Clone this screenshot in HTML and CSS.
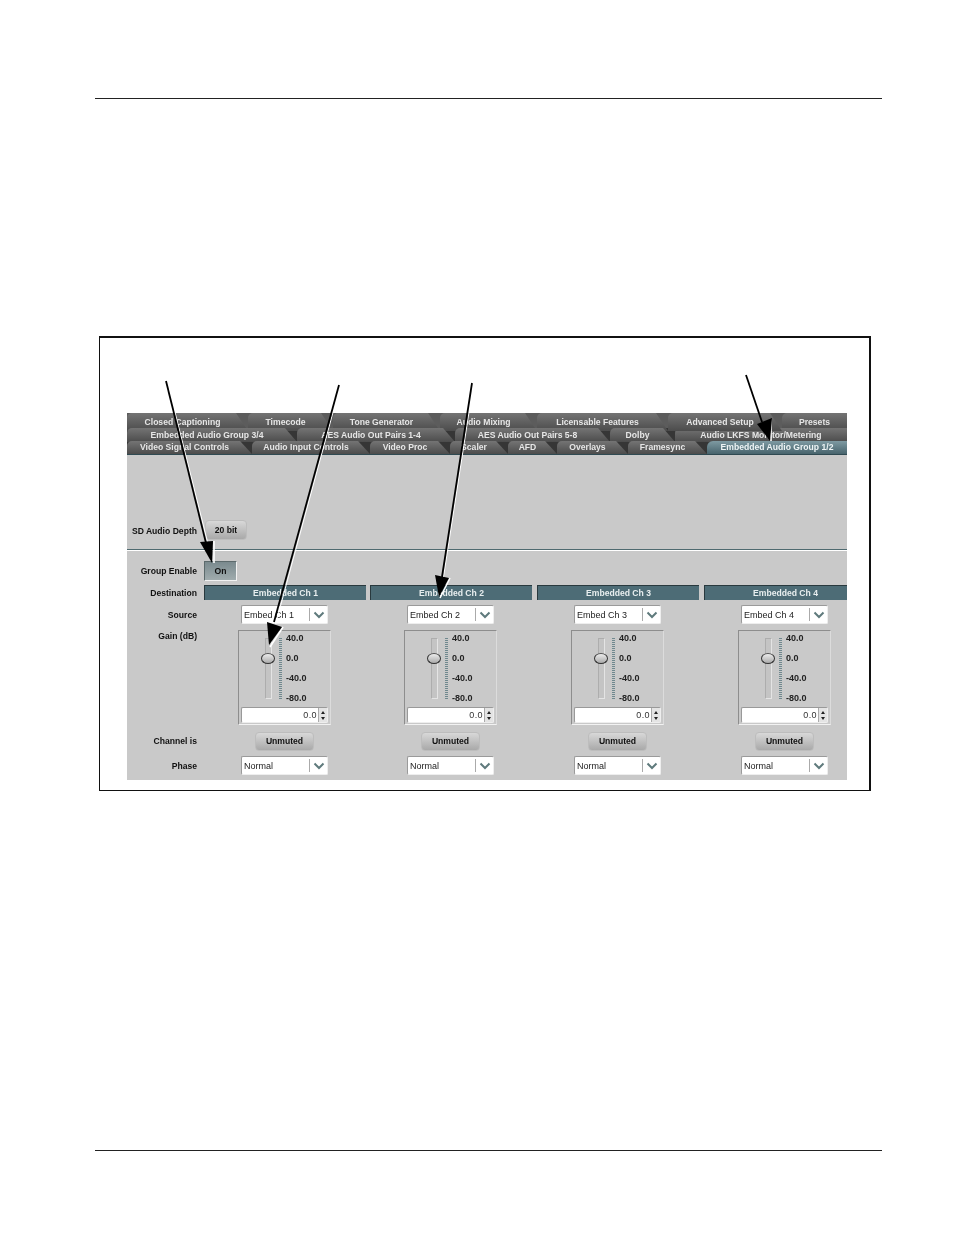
FILE: index.html
```html
<!DOCTYPE html>
<html lang="en">
<head>
  <meta charset="UTF-8">
  <title>Embedded Audio Group Controls</title>
  <link rel="stylesheet" href="styles.css">
</head>
<body>

<div class="sheet">
  <div class="rule"></div>

  <div class="figure">
    <div class="panel">

      <!-- Tab rows -->
      <div class="tabs">
        <div class="tab-row row-1">
          <div class="tab">Closed Captioning</div>
          <div class="tab">Timecode</div>
          <div class="tab">Tone Generator</div>
          <div class="tab">Audio Mixing</div>
          <div class="tab">Licensable Features</div>
          <div class="tab">Advanced Setup</div>
          <div class="tab">Presets</div>
        </div>
        <div class="tab-row row-2">
          <div class="tab">Embedded Audio Group 3/4</div>
          <div class="tab">AES Audio Out Pairs 1-4</div>
          <div class="tab">AES Audio Out Pairs 5-8</div>
          <div class="tab">Dolby</div>
          <div class="tab">Audio LKFS Monitor/Metering</div>
        </div>
        <div class="tab-row row-3">
          <div class="tab">Video Signal Controls</div>
          <div class="tab">Audio Input Controls</div>
          <div class="tab">Video Proc</div>
          <div class="tab">Scaler</div>
          <div class="tab">AFD</div>
          <div class="tab">Overlays</div>
          <div class="tab">Framesync</div>
          <div class="tab active">Embedded Audio Group 1/2</div>
        </div>
      </div>

      <!-- Top settings -->
      <div class="depth-row">
        <div class="label">SD Audio Depth</div>
        <div class="btn depth-btn">20 bit</div>
      </div>
      <div class="divider"></div>
      <div class="enable-row">
        <div class="label">Group Enable</div>
        <div class="toggle-on">On</div>
      </div>

      <!-- Channel grid -->
      <div class="channels">
        <div class="labels">
          <div class="label lbl-dest">Destination</div>
          <div class="label lbl-source">Source</div>
          <div class="label lbl-gain">Gain (dB)</div>
          <div class="label lbl-mute">Channel is</div>
          <div class="label">Phase</div>
        </div>

        <div class="channel">
          <div class="dest">Embedded Ch 1</div>
          <div class="select source"><span class="select-text">Embed Ch 1</span><span class="select-arrow"><svg width="12" height="8" viewBox="0 0 12 8"><path d="M1.5 1.5 L6 6 L10.5 1.5" fill="none" stroke="#5f7a7c" stroke-width="2"/></svg></span></div>
          <div class="gain">
            <div class="slider-area">
              <div class="track"><div class="thumb"></div></div>
              <div class="ticks"></div>
              <div class="scale"><span>40.0</span><span>0.0</span><span>-40.0</span><span>-80.0</span></div>
            </div>
            <div class="spinner"><span class="spin-value">0.0</span><span class="spin-arrows"><i class="up"></i><i class="down"></i></span></div>
          </div>
          <div class="btn mute">Unmuted</div>
          <div class="select"><span class="select-text">Normal</span><span class="select-arrow"><svg width="12" height="8" viewBox="0 0 12 8"><path d="M1.5 1.5 L6 6 L10.5 1.5" fill="none" stroke="#5f7a7c" stroke-width="2"/></svg></span></div>
        </div>

        <div class="channel">
          <div class="dest">Embedded Ch 2</div>
          <div class="select source"><span class="select-text">Embed Ch 2</span><span class="select-arrow"><svg width="12" height="8" viewBox="0 0 12 8"><path d="M1.5 1.5 L6 6 L10.5 1.5" fill="none" stroke="#5f7a7c" stroke-width="2"/></svg></span></div>
          <div class="gain">
            <div class="slider-area">
              <div class="track"><div class="thumb"></div></div>
              <div class="ticks"></div>
              <div class="scale"><span>40.0</span><span>0.0</span><span>-40.0</span><span>-80.0</span></div>
            </div>
            <div class="spinner"><span class="spin-value">0.0</span><span class="spin-arrows"><i class="up"></i><i class="down"></i></span></div>
          </div>
          <div class="btn mute">Unmuted</div>
          <div class="select"><span class="select-text">Normal</span><span class="select-arrow"><svg width="12" height="8" viewBox="0 0 12 8"><path d="M1.5 1.5 L6 6 L10.5 1.5" fill="none" stroke="#5f7a7c" stroke-width="2"/></svg></span></div>
        </div>

        <div class="channel">
          <div class="dest">Embedded Ch 3</div>
          <div class="select source"><span class="select-text">Embed Ch 3</span><span class="select-arrow"><svg width="12" height="8" viewBox="0 0 12 8"><path d="M1.5 1.5 L6 6 L10.5 1.5" fill="none" stroke="#5f7a7c" stroke-width="2"/></svg></span></div>
          <div class="gain">
            <div class="slider-area">
              <div class="track"><div class="thumb"></div></div>
              <div class="ticks"></div>
              <div class="scale"><span>40.0</span><span>0.0</span><span>-40.0</span><span>-80.0</span></div>
            </div>
            <div class="spinner"><span class="spin-value">0.0</span><span class="spin-arrows"><i class="up"></i><i class="down"></i></span></div>
          </div>
          <div class="btn mute">Unmuted</div>
          <div class="select"><span class="select-text">Normal</span><span class="select-arrow"><svg width="12" height="8" viewBox="0 0 12 8"><path d="M1.5 1.5 L6 6 L10.5 1.5" fill="none" stroke="#5f7a7c" stroke-width="2"/></svg></span></div>
        </div>

        <div class="channel">
          <div class="dest">Embedded Ch 4</div>
          <div class="select source"><span class="select-text">Embed Ch 4</span><span class="select-arrow"><svg width="12" height="8" viewBox="0 0 12 8"><path d="M1.5 1.5 L6 6 L10.5 1.5" fill="none" stroke="#5f7a7c" stroke-width="2"/></svg></span></div>
          <div class="gain">
            <div class="slider-area">
              <div class="track"><div class="thumb"></div></div>
              <div class="ticks"></div>
              <div class="scale"><span>40.0</span><span>0.0</span><span>-40.0</span><span>-80.0</span></div>
            </div>
            <div class="spinner"><span class="spin-value">0.0</span><span class="spin-arrows"><i class="up"></i><i class="down"></i></span></div>
          </div>
          <div class="btn mute">Unmuted</div>
          <div class="select"><span class="select-text">Normal</span><span class="select-arrow"><svg width="12" height="8" viewBox="0 0 12 8"><path d="M1.5 1.5 L6 6 L10.5 1.5" fill="none" stroke="#5f7a7c" stroke-width="2"/></svg></span></div>
        </div>
      </div>
    </div>

    <!-- Callout arrows drawn over the panel, with a white edge on one side -->
    <svg class="callouts" width="769" height="452" viewBox="-1 -1 769 452">
      <path class="edge" d="M66.2 42 L106.8 204"/>
      <path class="edge" d="M239.4 46 L174.6 285"/>
      <path class="edge" d="M372.5 44 L342.5 238"/>
      <path class="line" d="M65 42 L105 204"/>
      <path class="line" d="M238 46 L173 283"/>
      <path class="line" d="M371 44 L341 238"/>
      <path class="line" d="M645 36 L661 83"/>
      <path class="head-edge" d="M113 202 L113 224"/>
      <path class="head" d="M99 203 L112 202 L111 224 Z"/>
      <path class="head-edge" d="M182 288 L169 308"/>
      <path class="head" d="M166 283 L181 288 L168 306 Z"/>
      <path class="head-edge" d="M349 239 L339 259"/>
      <path class="head" d="M334 236 L348 239 L338 258 Z"/>
      <path class="head-edge" d="M670 80 L670 102"/>
      <path class="head" d="M656 85 L671 79 L669 102 Z"/>
    </svg>
  </div>

  <div class="rule bottom"></div>
</div>

</body>
</html>
```

FILE: styles.css
```css
html, body { margin: 0; padding: 0; background: #fff; }
body { font-family: "Liberation Sans", Arial, sans-serif; }

.sheet { width: 954px; height: 1235px; padding: 98px 0 0 95px; box-sizing: border-box; }
.rule { width: 787px; height: 1px; background: #222; }
.rule.bottom { margin-top: 359px; }

.figure {
  position: relative;
  width: 772px;
  height: 455px;
  margin: 237px 0 0 4px;
  padding: 75px 0 0 27px;
  box-sizing: border-box;
  border: solid #111;
  border-width: 2px 2px 1px 1px;
  background: #fff;
}
.panel { width: 720px; height: 367px; background: #c9c9c9; overflow: hidden; filter: blur(0.3px); }

/* tabs */
.tabs { background: linear-gradient(#5c5c5c 15px, #363636 15px); height: 41px; border-bottom: 1px solid #2f4a52; }
.tab-row { display: grid; }
.row-1 { height: 15px; grid-template-columns: 121px 85px 107px 97px 131px 114px 65px; }
.row-2 { height: 13px; grid-template-columns: 170px 158px 155px 65px 172px; }
.row-3 { height: 13px; grid-template-columns: 125px 118px 80px 58px 49px 71px 79px 140px; }
.tab {
  font-size: 8.6px;
  font-weight: bold;
  line-height: 18px;
  color: #e6e6e6;
  text-align: center;
  white-space: nowrap;
  padding-right: 10px;
  box-sizing: border-box;
  background: linear-gradient(#747474, #4c4c4c);
  clip-path: polygon(0 0, calc(100% - 12px) 0, 100% 100%, 0 100%);
  border-top-left-radius: 5px;
}
.row-2 .tab { line-height: 14px; }
.row-3 .tab { line-height: 13px; }
.tab:last-child { padding-right: 0; clip-path: none; }
.tab.active {
  color: #eef4f5;
  background: linear-gradient(#7e9aa2, #48646d);
  border-top-left-radius: 6px;
}

/* settings */
.label { font-size: 8.6px; font-weight: bold; color: #111; text-align: right; white-space: nowrap; }
.depth-row { display: flex; align-items: center; gap: 8px; height: 20px; margin-top: 65px; }
.depth-row .label { padding-top: 2px; }
.depth-row .label, .enable-row .label { width: 70px; }
.btn {
  font-size: 8.6px;
  font-weight: bold;
  color: #111;
  text-align: center;
  line-height: 17px;
  height: 19px;
  border-radius: 4px;
  box-sizing: border-box;
  background: linear-gradient(#d8d8d8, #a9a9a9);
  border: 1px solid #bdbdbd;
}
.depth-btn { width: 42px; height: 20px; line-height: 18px; }
.divider { height: 1px; margin: 9px 0 0 0; background: #4f6a70; border-bottom: 1px solid #fff; }
.enable-row { display: flex; align-items: center; gap: 7px; height: 20px; margin-top: 10px; }
.toggle-on {
  width: 33px;
  height: 20px;
  box-sizing: border-box;
  font-size: 8.6px;
  font-weight: bold;
  line-height: 18px;
  text-align: center;
  color: #111;
  background: linear-gradient(#7a8a8e, #a0acae);
  border: 1px solid #5c6a6c;
  border-right-color: #f2f2f2;
  border-bottom-color: #f2f2f2;
}

/* channels */
.channels { display: grid; grid-template-columns: 77px 166px 167px 167px 162px; margin-top: 4px; }
.labels { padding: 3px 7px 0 0; }
.lbl-dest { height: 22px; }
.lbl-source { height: 21px; }
.lbl-gain { height: 105px; }
.lbl-mute { height: 25px; }
.channel { width: 162px; display: flex; flex-direction: column; align-items: flex-start; }
.dest {
  width: 100%;
  height: 15px;
  box-sizing: border-box;
  font-size: 8.6px;
  font-weight: bold;
  line-height: 14px;
  text-align: center;
  color: #e8eeef;
  background: #4d6c76;
  border-top: 1px solid #29393e;
  border-left: 1px solid #29393e;
}

.select {
  display: flex;
  width: 87px;
  height: 19px;
  margin-left: 37px;
  box-sizing: border-box;
  background: #fff;
  border: 1px solid #9a9a9a;
  border-right-color: #eee;
  border-bottom-color: #eee;
  border-radius: 2px;
  align-items: center;
  font-size: 9px;
  color: #222;
}
.select.source { margin-top: 5px; }
.select-text { flex: 1; padding-left: 2px; }
.select-arrow { display: flex; align-items: center; justify-content: center; width: 17px; height: 13px; border-left: 1px solid #aaa; }

.gain {
  width: 93px;
  height: 95px;
  margin: 6px 0 0 34px;
  box-sizing: border-box;
  border: 1px solid #8d8d8d;
  border-right-color: #dcdcdc;
  border-bottom-color: #f2f2f2;
  padding: 0 2px;
}
.slider-area { display: flex; height: 75px; padding-top: 7px; box-sizing: border-box; }
.track { position: relative; width: 7px; height: 61px; margin-left: 24px; flex: none; background: #c4c4c4; border: 1px solid #adadad; box-sizing: border-box; border-right-color: #e4e4e4; border-bottom-color: #e4e4e4; }
.thumb { position: absolute; left: -5px; top: 14px; width: 14px; height: 11px; border-radius: 50%; background: linear-gradient(#ececec, #aaa); border: 1px solid #333; border-top-color: #555; box-sizing: border-box; }
.ticks {
  width: 3px;
  height: 61px;
  margin-left: 7px;
  flex: none;
  background: repeating-linear-gradient(#6f888e 0 1px, transparent 1px 2px);
}
.scale { display: flex; flex-direction: column; justify-content: space-between; height: 70px; margin: -5px 0 0 4px; font-size: 9px; font-weight: bold; color: #222; line-height: 10px; }
.spinner {
  display: flex;
  align-items: center;
  width: 87px;
  height: 16px;
  box-sizing: border-box;
  margin-top: 1px;
  background: #fff;
  border: 1px solid #999;
  border-right-color: #eee;
  border-bottom-color: #eee;
  border-radius: 2px;
  font-size: 9px;
  letter-spacing: 0.4px;
  color: #333;
}
.spin-value { flex: 1; text-align: right; padding-right: 1px; }
.spin-arrows { display: flex; flex-direction: column; align-items: center; gap: 3px; width: 8px; height: 14px; justify-content: center; background: #e4e4e4; border-left: 1px solid #aaa; }
.spin-arrows i { display: block; width: 0; height: 0; border-left: 2px solid transparent; border-right: 2px solid transparent; }
.spin-arrows .up { border-bottom: 3px solid #222; }
.spin-arrows .down { border-top: 3px solid #222; }

.mute { width: 59px; margin: 7px 0 5px 51px; }

/* callouts */
.callouts { position: absolute; left: 0; top: 0; }
.callouts .line { fill: none; stroke: #000; stroke-width: 1.8; }
.callouts .edge { fill: none; stroke: #fff; stroke-width: 1; }
.callouts .head { fill: #000; }
.callouts .head-edge { fill: none; stroke: #fff; stroke-width: 1.6; }
```
